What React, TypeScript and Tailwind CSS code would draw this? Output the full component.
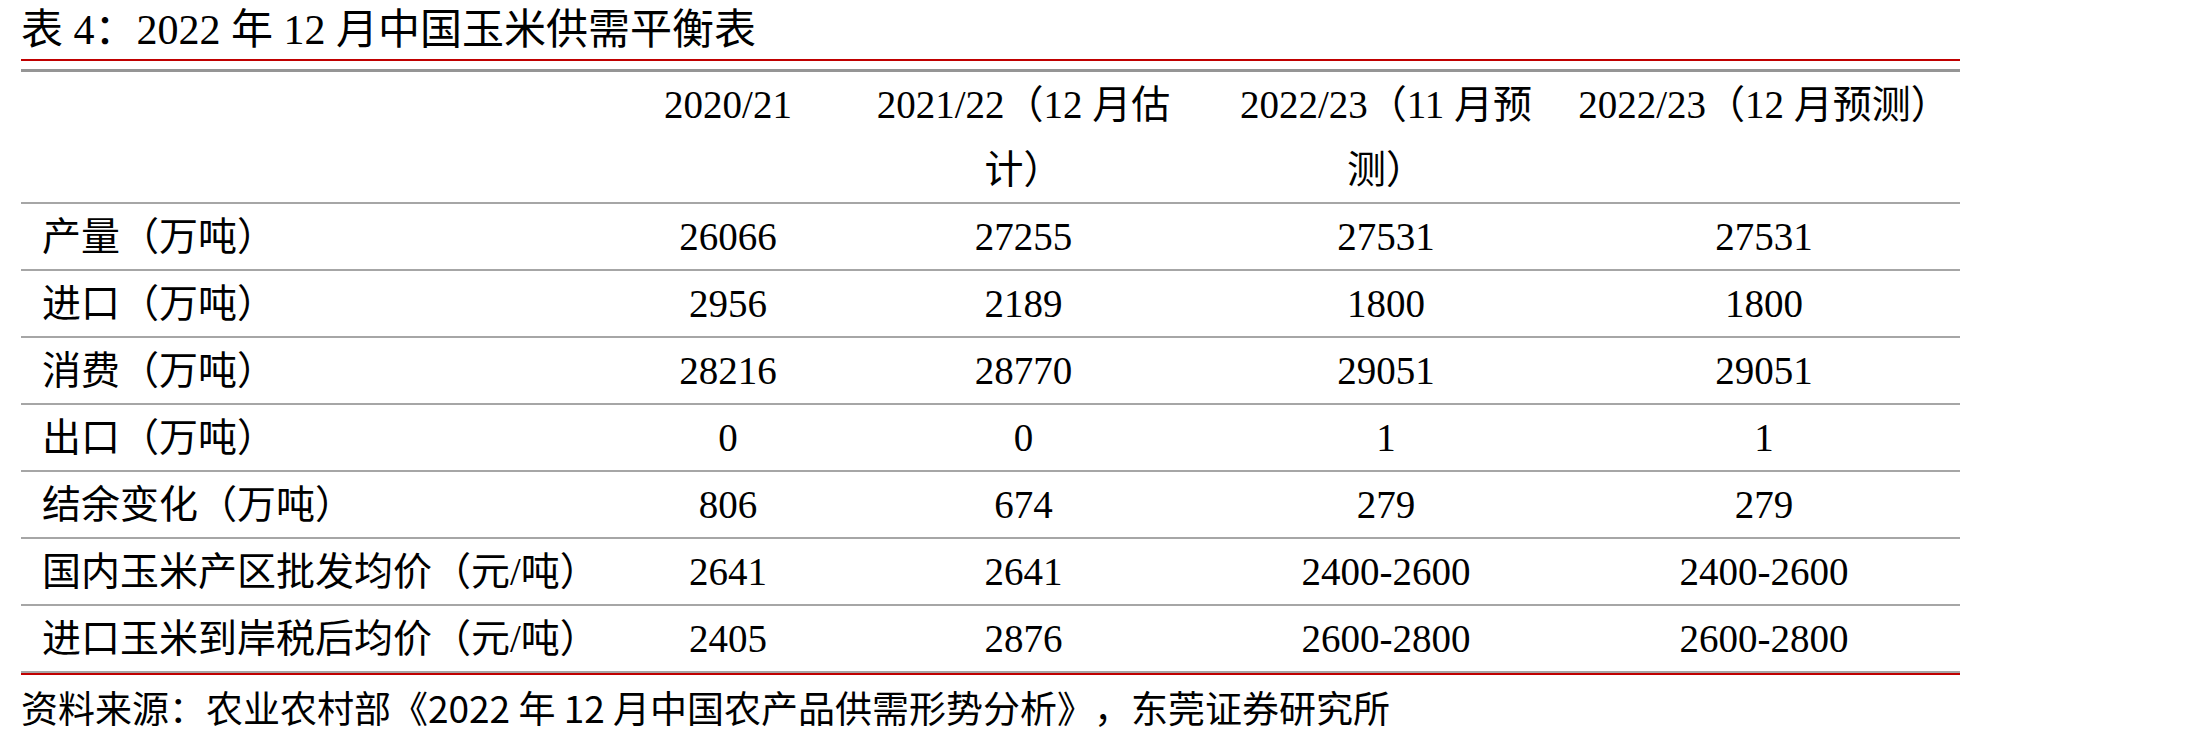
const serif = "font-['Liberation_Serif','Noto_Sans_CJK_SC',serif]";
const cols = "grid grid-cols-[592px_230px_361px_364px_392px]";

const rows: [string, string, string, string, string][] = [
  ["产量（万吨）", "26066", "27255", "27531", "27531"],
  ["进口（万吨）", "2956", "2189", "1800", "1800"],
  ["消费（万吨）", "28216", "28770", "29051", "29051"],
  ["出口（万吨）", "0", "0", "1", "1"],
  ["结余变化（万吨）", "806", "674", "279", "279"],
  ["国内玉米产区批发均价（元/吨）", "2641", "2641", "2400-2600", "2400-2600"],
  ["进口玉米到岸税后均价（元/吨）", "2405", "2876", "2600-2800", "2600-2800"],
];

export default function App() {
  return (
    <div className="w-[2209px] h-[742px] overflow-hidden bg-white text-black">
      <div className="pl-[21px]">
        <div className={`${serif} text-[42px] leading-[57px] pt-[2px] whitespace-nowrap`}>
          表 4：2022 年 12 月中国玉米供需平衡表
        </div>
        <div className="w-[1939px] h-[2px] bg-[#c00000]" />
        <div className="w-[1939px] h-[3px] mt-[8px] bg-[#959595]" />

        <div className={`${serif} w-[1939px] text-[39px]`}>
          <div className={`${cols} border-b-2 border-[#a6a6a6] leading-[65px] text-center`}>
            <div />
            <div>2020/21</div>
            <div>
              2021/22（12 月估
              <br />
              计）
            </div>
            <div>
              2022/23（11 月预
              <br />
              测）
            </div>
            <div className="whitespace-nowrap">2022/23（12 月预测）</div>
          </div>

          {rows.map(([label, a, b, c, d]) => (
            <div
              key={label}
              className={`${cols} h-[67px] border-b-2 border-[#a6a6a6] leading-[65px]`}
            >
              <div className="pl-[21px] whitespace-nowrap">{label}</div>
              <div className="text-center">{a}</div>
              <div className="text-center">{b}</div>
              <div className="text-center">{c}</div>
              <div className="text-center">{d}</div>
            </div>
          ))}
          <div className="h-[2px] bg-[#c00000]" />
        </div>

        <div className="font-['Noto_Sans_CJK_SC',sans-serif] text-[37px] leading-[64px] whitespace-nowrap [text-spacing-trim:space-all]">
          资料来源：农业农村部《2022 年 12 月中国农产品供需形势分析》，东莞证券研究所
        </div>
      </div>
    </div>
  );
}
